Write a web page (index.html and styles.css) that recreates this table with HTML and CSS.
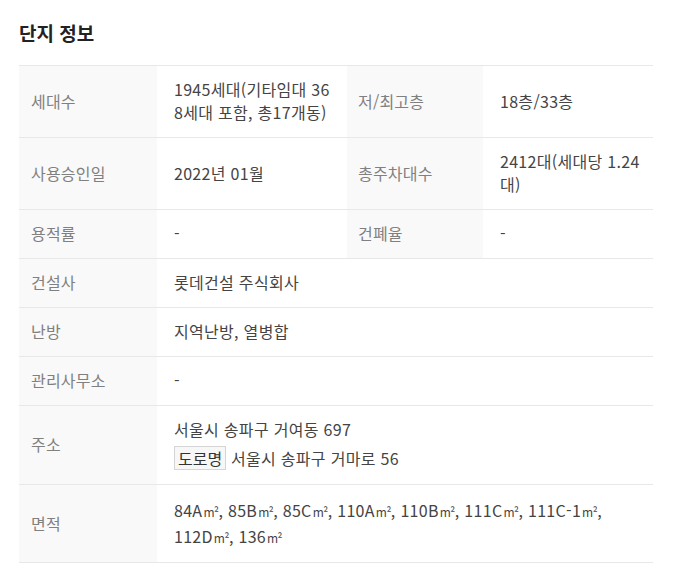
FILE: index.html
```html
<!DOCTYPE html>
<html lang="ko">
<head>
<meta charset="utf-8">
<title>단지 정보</title>
<link rel="stylesheet" href="styles.css">
</head>
<body>
<section class="complex">
  <h2 class="complex-title">단지 정보</h2>
  <table class="info-table">
    <colgroup>
      <col class="col-label1">
      <col class="col-value1">
      <col class="col-label2">
      <col class="col-value2">
    </colgroup>
    <tbody>
      <tr>
        <th class="label">세대수</th>
        <td class="value">1945세대(기타임대 36<br>8세대 포함, 총17개동)</td>
        <th class="label label-2">저/최고층</th>
        <td class="value">18층/33층</td>
      </tr>
      <tr>
        <th class="label">사용승인일</th>
        <td class="value">2022년 01월</td>
        <th class="label label-2">총주차대수</th>
        <td class="value">2412대(세대당 1.24<br>대)</td>
      </tr>
      <tr>
        <th class="label">용적률</th>
        <td class="value">-</td>
        <th class="label label-2">건폐율</th>
        <td class="value">-</td>
      </tr>
      <tr>
        <th class="label">건설사</th>
        <td class="value" colspan="3">롯데건설 주식회사</td>
      </tr>
      <tr>
        <th class="label">난방</th>
        <td class="value" colspan="3">지역난방, 열병합</td>
      </tr>
      <tr>
        <th class="label">관리사무소</th>
        <td class="value" colspan="3">-</td>
      </tr>
      <tr>
        <th class="label">주소</th>
        <td class="value" colspan="3">
          <div class="addr-line">서울시 송파구 거여동 697</div>
          <div class="addr-line addr-road"><span class="badge">도로명</span> 서울시 송파구 거마로 56</div>
        </td>
      </tr>
      <tr>
        <th class="label">면적</th>
        <td class="value value-area" colspan="3">84A<span class="unit">m²</span>, 85B<span class="unit">m²</span>, 85C<span class="unit">m²</span>, 110A<span class="unit">m²</span>, 110B<span class="unit">m²</span>, 111C<span class="unit">m²</span>, 111C-1<span class="unit">m²</span>,<br>112D<span class="unit">m²</span>, 136<span class="unit">m²</span></td>
      </tr>
    </tbody>
  </table>
</section>
</body>
</html>
```

FILE: styles.css
```css
html, body {
  margin: 0;
  padding: 0;
  background: #ffffff;
}

body {
  font-family: "Noto Sans CJK KR", "Noto Sans", sans-serif;
  color: #333333;
}

.complex {
  padding: 21px 21px 0 19px;
}

.complex-title {
  margin: 0 0 20px 0;
  font-size: 19px;
  line-height: 24px;
  font-weight: 700;
  color: #222222;
}

.info-table {
  width: 634px;
  border-collapse: collapse;
  table-layout: fixed;
  border-top: 1px solid #e8e8e8;
}

.col-label1 { width: 138px; }
.col-value1 { width: 190px; }
.col-label2 { width: 136px; }
.col-value2 { width: 170px; }

.info-table tr {
  border-bottom: 1px solid #e8e8e8;
}

.label {
  background: #f9f9f9;
  color: #808080;
  font-weight: 400;
  text-align: left;
  font-size: 16px;
  line-height: 23px;
  letter-spacing: 0.2px;
  padding: 12px 4px 13px 12px;
  vertical-align: middle;
}

.label-2 {
  padding-left: 11px;
}

.value {
  font-size: 16px;
  line-height: 23px;
  letter-spacing: 0.3px;
  color: #444444;
  padding: 12px 4px 13px 17px;
  vertical-align: middle;
}

.addr-road {
  margin-top: 4px;
  line-height: 26px;
}

.badge {
  display: inline-block;
  border: 1px solid #d5d5d5;
  background: #f7f7f7;
  padding: 0 3px;
  line-height: 22px;
  letter-spacing: 0;
  color: #333333;
}

.value-area {
  line-height: 26px;
}

.unit {
  font-size: 12px;
  line-height: 1;
  letter-spacing: -0.5px;
  margin-left: 1px;
}
```
